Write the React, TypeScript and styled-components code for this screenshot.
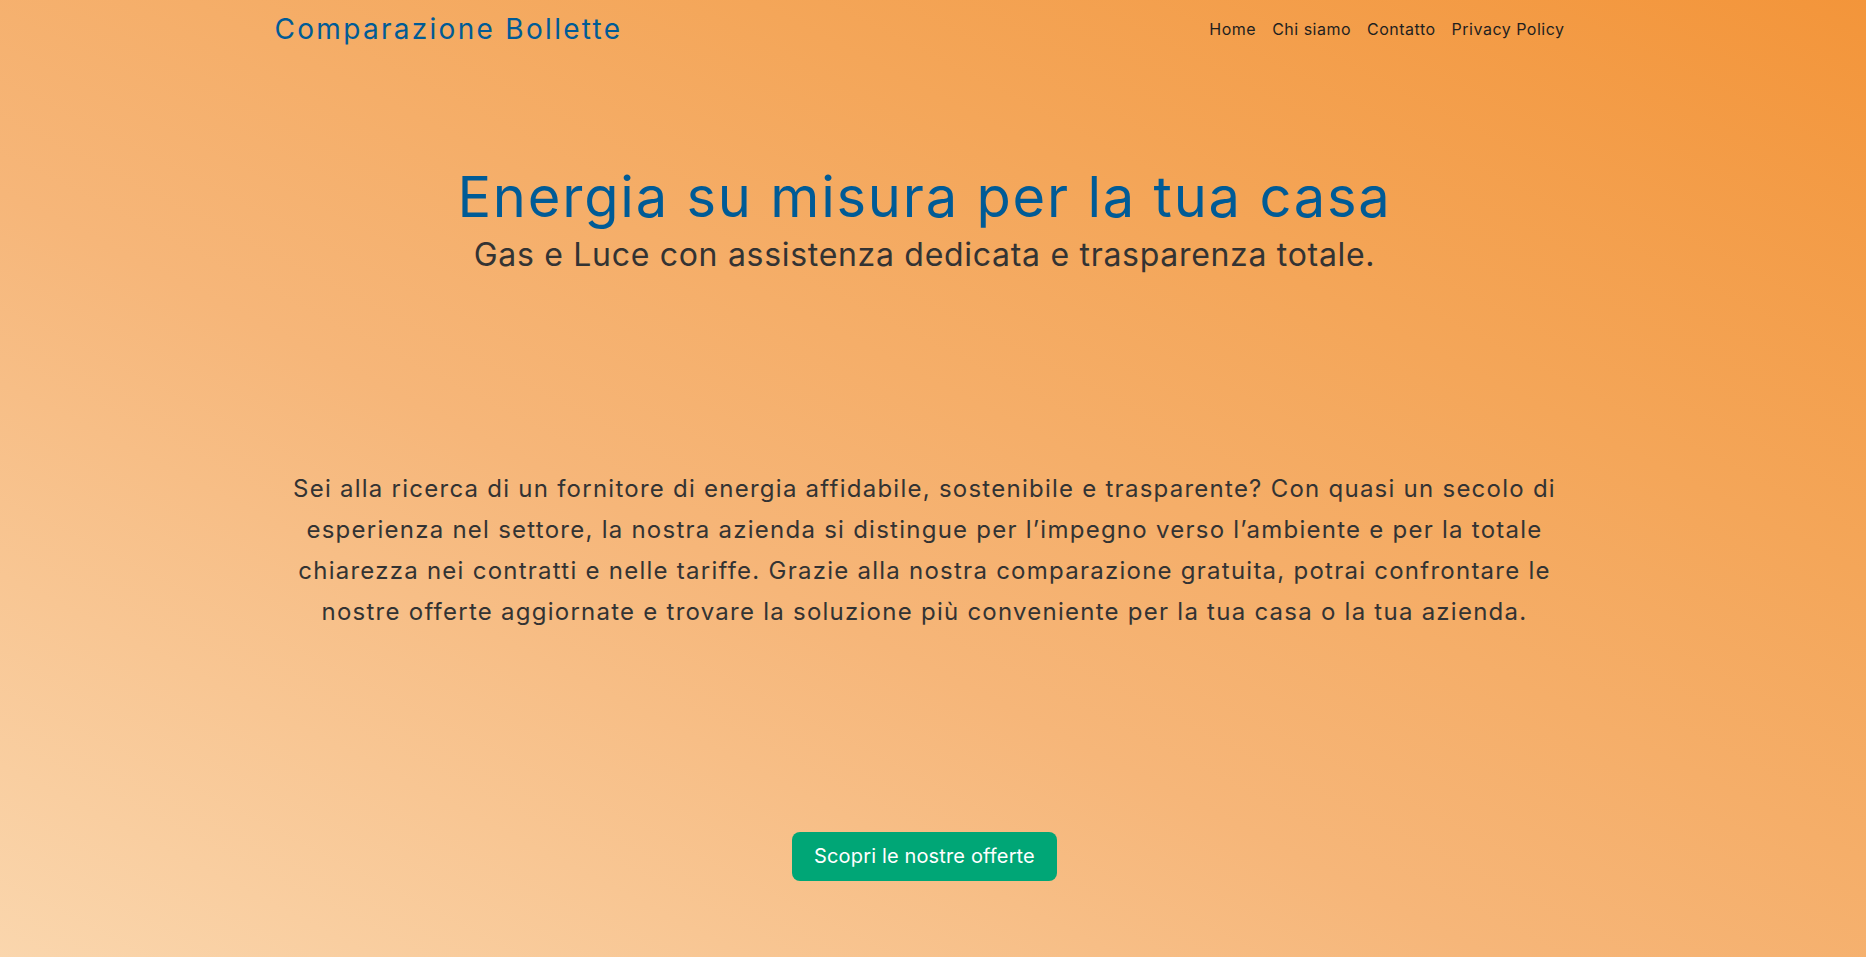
import React from "react";
import styled, { createGlobalStyle } from "styled-components";

const GlobalStyle = createGlobalStyle`
  html, body {
    margin: 0;
    padding: 0;
    height: 100%;
  }
  body {
    font-family: Inter, "Liberation Sans", sans-serif;
    color: #333333;
    background: linear-gradient(to top right, #fad6ad 0%, #f6b679 40%, #f4a659 70%, #f3953a 100%);
    background-attachment: fixed;
    min-height: 957px;
  }
  #root {
    min-height: 957px;
  }
`;

const Page = styled.div`
  box-sizing: border-box;
  width: calc(100% - 17px);
  min-height: 957px;
  display: flex;
  flex-direction: column;
`;

const Container = styled.div`
  box-sizing: border-box;
  width: 100%;
  max-width: 1320px;
  margin: 0 auto;
  padding: 0 12px;
`;

const NavBar = styled.header`
  display: flex;
  align-items: center;
  justify-content: space-between;
  height: 58px;
`;

const Brand = styled.a`
  font-size: 28px;
  color: #005b96;
  text-decoration: none;
  letter-spacing: 2.3px;
  margin-left: -2px;
`;

const NavList = styled.nav`
  display: flex;
  align-items: center;
`;

const NavLink = styled.a`
  font-size: 16px;
  color: #1f1f1f;
  text-decoration: none;
  padding: 8px;
  letter-spacing: 0.5px;
`;

const Hero = styled.section`
  text-align: center;
  padding-top: 106px;
`;

const Title = styled.h1`
  margin: 0;
  font-size: 56px;
  font-weight: 400;
  line-height: 1.2;
  letter-spacing: 1.8px;
  color: #005b96;
`;

const Subtitle = styled.p`
  margin: 5px 0 0;
  font-size: 32px;
  line-height: 1.2;
  letter-spacing: 0.7px;
  color: #333333;
`;

const Intro = styled.p`
  margin: 193px auto 0;
  font-size: 24px;
  line-height: 41px;
  letter-spacing: 1.25px;
  text-align: center;
  color: #333333;
`;

const Cta = styled.div`
  display: flex;
  justify-content: center;
  margin-top: 200px;
`;

const Button = styled.a`
  display: inline-flex;
  align-items: center;
  height: 49px;
  box-sizing: border-box;
  padding: 0 22px;
  background: #00a676;
  color: #ffffff;
  font-size: 20px;
  letter-spacing: 0.15px;
  border-radius: 8px;
  text-decoration: none;
`;

export default function App() {
  return (
    <>
      <GlobalStyle />
      <Page>
        <Container>
          <NavBar>
            <Brand href="#">Comparazione Bollette</Brand>
            <NavList>
              <NavLink href="#">Home</NavLink>
              <NavLink href="#">Chi siamo</NavLink>
              <NavLink href="#">Contatto</NavLink>
              <NavLink href="#">Privacy Policy</NavLink>
            </NavList>
          </NavBar>
          <Hero>
            <Title>Energia su misura per la tua casa</Title>
            <Subtitle>Gas e Luce con assistenza dedicata e trasparenza totale.</Subtitle>
          </Hero>
          <Intro>
            Sei alla ricerca di un fornitore di energia affidabile, sostenibile e trasparente? Con quasi un secolo di
            esperienza nel settore, la nostra azienda si distingue per l’impegno verso l’ambiente e per la totale
            chiarezza nei contratti e nelle tariffe. Grazie alla nostra comparazione gratuita, potrai confrontare le
            nostre offerte aggiornate e trovare la soluzione più conveniente per la tua casa o la tua azienda.
          </Intro>
          <Cta>
            <Button href="#">Scopri le nostre offerte</Button>
          </Cta>
        </Container>
      </Page>
    </>
  );
}
